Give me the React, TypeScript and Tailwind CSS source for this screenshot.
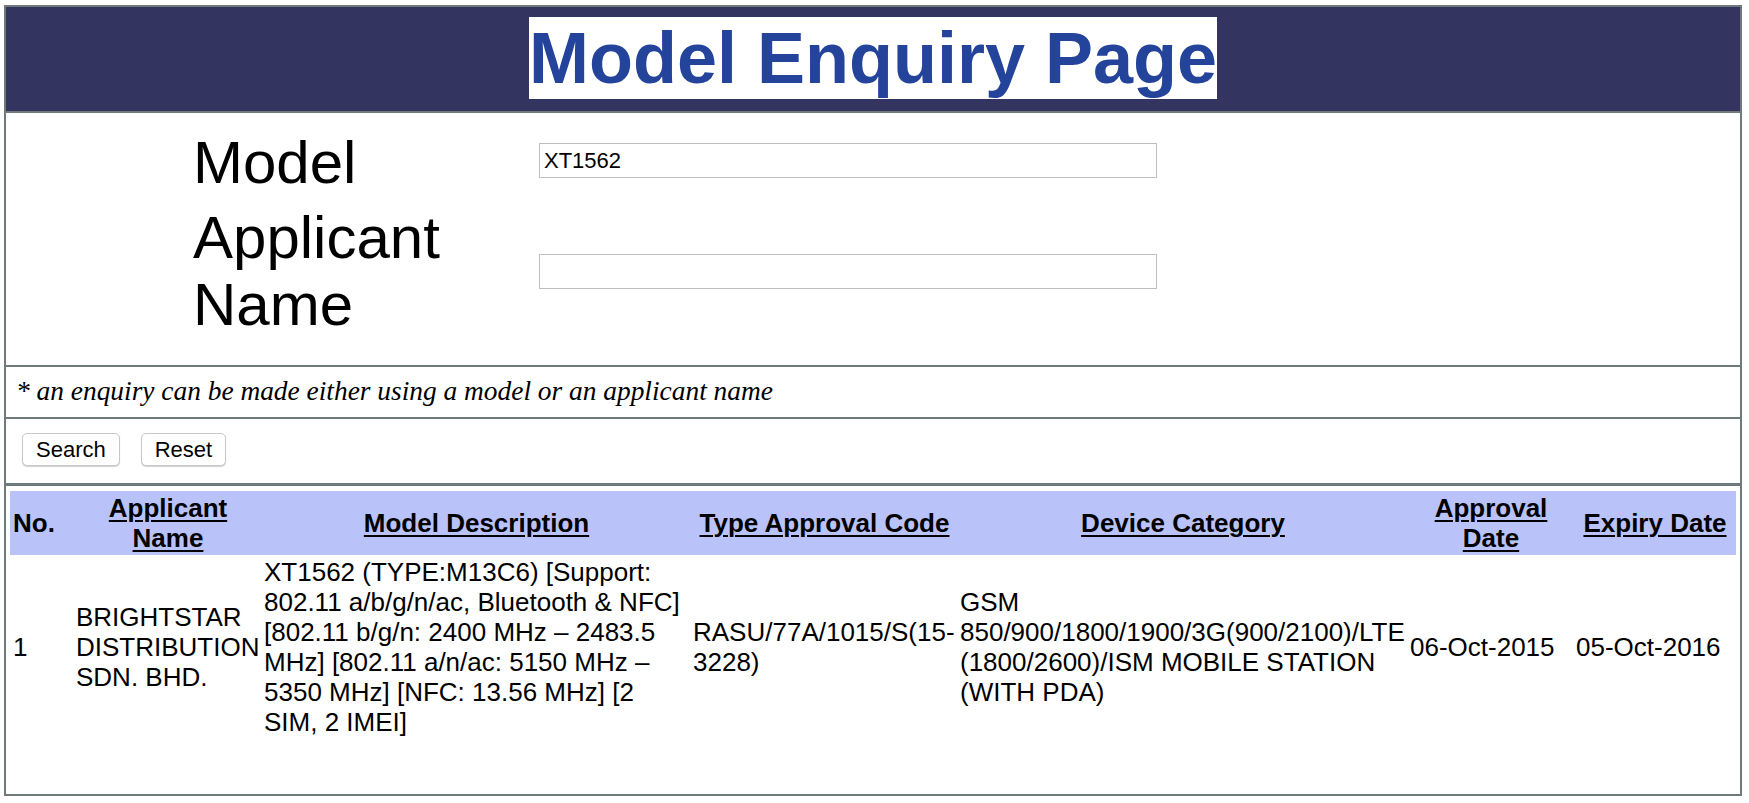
import React from "react";

const headers = [
  { label: "No.", align: "text-left pl-[3px]", link: false },
  { label: "Applicant Name", align: "text-center px-[2px]", link: true },
  { label: "Model Description", align: "text-center px-[2px]", link: true },
  { label: "Type Approval Code", align: "text-center px-[2px]", link: true },
  { label: "Device Category", align: "text-center px-[2px]", link: true },
  { label: "Approval Date", align: "text-center px-[2px]", link: true },
  { label: "Expiry Date", align: "text-center px-[2px]", link: true },
];

const colWidths = [64, 188, 429, 267, 450, 166, 162];

type Row = {
  no: string;
  applicant: string[];
  description: string[];
  code: string[];
  category: string[];
  approval: string;
  expiry: string;
};

const rows: Row[] = [
  {
    no: "1",
    applicant: ["BRIGHTSTAR", "DISTRIBUTION", "SDN. BHD."],
    description: [
      "XT1562 (TYPE:M13C6) [Support:",
      "802.11 a/b/g/n/ac, Bluetooth & NFC]",
      "[802.11 b/g/n: 2400 MHz – 2483.5",
      "MHz] [802.11 a/n/ac: 5150 MHz –",
      "5350 MHz] [NFC: 13.56 MHz] [2",
      "SIM, 2 IMEI]",
    ],
    code: ["RASU/77A/1015/S(15-", "3228)"],
    category: [
      "GSM",
      "850/900/1800/1900/3G(900/2100)/LTE",
      "(1800/2600)/ISM MOBILE STATION",
      "(WITH PDA)",
    ],
    approval: "06-Oct-2015",
    expiry: "05-Oct-2016",
  },
];

function Lines({ lines }: { lines: string[] }) {
  return (
    <>
      {lines.map((line, i) => (
        <span key={i} className="block whitespace-nowrap">
          {line}
        </span>
      ))}
    </>
  );
}

export default function App() {
  return (
    <div className="min-h-screen bg-white pl-[4px] pt-[5px] font-['Liberation_Sans',Arial,sans-serif] text-black">
      <div className="w-[1738px] border-2 border-[#6f7a7b]">
        {/* title bar */}
        <header className="flex h-[104px] justify-center bg-[#333560] pt-[10px]">
          <h1 className="inline-block h-[82px] bg-white text-[72px] font-bold leading-[82px] text-[#24449b]">
            Model Enquiry Page
          </h1>
        </header>

        {/* form */}
        <section className="flex h-[254px] flex-col gap-[7px] border-t-2 border-[#6f7a7b] pt-[16px]">
          <div className="flex items-start">
            <label className="ml-[187px] w-[346px] text-[60px] leading-[67.5px]">Model</label>
            <input
              readOnly
              value="XT1562"
              className="mt-[14px] h-[35px] w-[618px] border border-[#bfbfbf] bg-white px-[4px] text-[22px] outline-none"
            />
          </div>
          <div className="flex items-center">
            <label className="ml-[187px] w-[346px] text-[60px] leading-[67.5px]">
              Applicant
              <br />
              Name
            </label>
            <input
              readOnly
              value=""
              className="h-[35px] w-[618px] border border-[#bfbfbf] bg-white px-[4px] text-[22px] outline-none"
            />
          </div>
        </section>

        {/* note */}
        <div className="flex h-[52px] items-center border-t-2 border-[#6f7a7b] pl-[10px] font-['Liberation_Serif',serif] text-[27.4px] italic">
          * an enquiry can be made either using a model or an applicant name
        </div>

        {/* actions */}
        <div className="flex h-[66px] items-start gap-[21px] border-t-2 border-[#6f7a7b] pl-[16px] pt-[14px]">
          <button className="h-[33px] rounded-[5px] border border-[#c8c8c8] bg-white px-[13px] text-[22px] leading-none shadow-[0_1px_1px_rgba(0,0,0,0.18)]">
            Search
          </button>
          <button className="h-[33px] rounded-[5px] border border-[#c8c8c8] bg-white px-[13px] text-[22px] leading-none shadow-[0_1px_1px_rgba(0,0,0,0.18)]">
            Reset
          </button>
        </div>

        {/* results */}
        <section className="h-[311px] border-t-[3px] border-[#6f7a7b] px-[4px] pt-[5px]">
          <table className="w-[1726px] table-fixed border-collapse text-[26px] leading-[30px]">
            <colgroup>
              {colWidths.map((w, i) => (
                <col key={i} style={{ width: w }} />
              ))}
            </colgroup>
            <thead>
              <tr className="bg-[#b9c3fa]">
                {headers.map((h) => (
                  <th key={h.label} className={`py-[2px] align-middle font-bold ${h.align}`}>
                    {h.link ? (
                      <span className="underline decoration-2 underline-offset-[3px]">{h.label}</span>
                    ) : (
                      h.label
                    )}
                  </th>
                ))}
              </tr>
            </thead>
            <tbody>
              {rows.map((r) => (
                <tr key={r.no}>
                  <td className="pl-[3px] pt-[2px] align-middle">{r.no}</td>
                  <td className="px-[2px] pt-[2px] align-middle">
                    <Lines lines={r.applicant} />
                  </td>
                  <td className="px-[2px] pt-[2px] align-middle">
                    <Lines lines={r.description} />
                  </td>
                  <td className="px-[2px] pt-[2px] align-middle">
                    <Lines lines={r.code} />
                  </td>
                  <td className="px-[2px] pt-[2px] align-middle">
                    <Lines lines={r.category} />
                  </td>
                  <td className="px-[2px] pt-[2px] align-middle whitespace-nowrap">{r.approval}</td>
                  <td className="px-[2px] pt-[2px] align-middle whitespace-nowrap">{r.expiry}</td>
                </tr>
              ))}
            </tbody>
          </table>
        </section>
      </div>
    </div>
  );
}
